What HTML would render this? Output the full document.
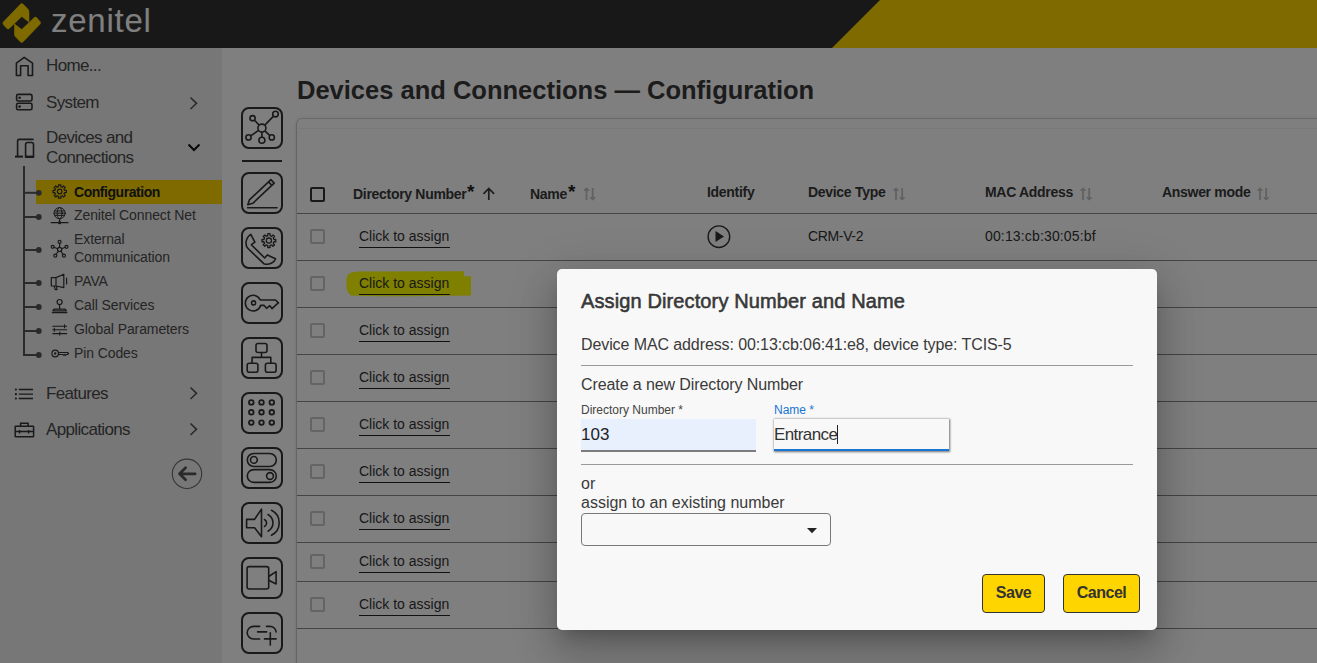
<!DOCTYPE html><html><head><meta charset="utf-8"><style>
*{box-sizing:border-box;margin:0;padding:0}
html,body{width:1317px;height:663px;overflow:hidden;background:#fff;font-family:"Liberation Sans",sans-serif;color:#333}
.abs{position:absolute}
.t{position:absolute;white-space:nowrap}
#hdr{left:0;top:0;width:1317px;height:48px;background:#303030}
#side{left:0;top:48px;width:222px;height:615px;background:#eeeeee}
.nav{font-size:17px;color:#4a4a4a;line-height:20px;left:46px;letter-spacing:-0.65px}
.sub{font-size:14px;color:#4a4a4a;line-height:18px;left:74px;letter-spacing:-0.1px}
.th{font-size:14px;font-weight:bold;color:#383838;line-height:18px;letter-spacing:-0.3px}
.cb{position:absolute;left:309.5px;width:15px;height:15px;border:2px solid #c8c8c8;border-radius:2px}
.cta{font-size:14px;color:#333;line-height:16px}
.ul{position:absolute;left:359px;width:91px;height:1px;background:#222}
.rl{position:absolute;left:297px;width:1020px;height:1px;background:#888}
#ov{left:0;top:0;width:1317px;height:663px;background:rgba(0,0,0,0.5)}
#dlg{left:557px;top:269px;width:600px;height:361px;background:#f8f8f8;border-radius:5px;box-shadow:0 11px 15px -7px rgba(0,0,0,.2),0 24px 38px 3px rgba(0,0,0,.14),0 9px 46px 8px rgba(0,0,0,.12)}
.dt{color:#3a3a3a}
.btn{position:absolute;top:305px;height:39px;background:#ffd500;border:1px solid #333;border-radius:4px;font-weight:bold;font-size:16px;color:#333;text-align:center;line-height:35px;letter-spacing:-0.5px}
</style></head><body>
<div id="hdr" class="abs"></div>
<svg class="abs" style="left:0;top:0" width="1317" height="48"><polygon points="832,48 880,0 1317,0 1317,48" fill="#ffd500"/></svg>
<svg class="abs" style="left:0;top:0" width="48" height="48"><g fill="#ffd500" stroke="#ffd500" stroke-width="0.6" stroke-linejoin="round"><path d="M3.50 24.68 Q2.17 23.19 3.56 21.75 L20.35 4.34 Q21.74 2.90 23.15 4.31 L27.57 8.73 Q28.99 10.14 28.99 12.14 L28.99 22.10 L21.74 16.52 L9.42 28.33 Q7.97 29.71 6.64 28.22 Z"/><path d="M39.98 21.40 Q41.30 22.90 39.92 24.34 L23.13 41.75 Q21.74 43.19 20.32 41.77 L15.91 37.36 Q14.49 35.94 14.49 33.94 L14.49 23.99 L21.74 29.57 L34.06 17.76 Q35.51 16.38 36.84 17.87 Z"/></g></svg>
<div class="t" style="left:51px;top:1px;font-size:33px;line-height:40px;color:#fff;letter-spacing:0.75px">zenitel</div>
<div id="side" class="abs"></div>
<div class="abs" style="left:36px;top:180px;width:186px;height:24px;background:#ffd500"></div>
<svg class="abs" style="left:0;top:0" width="222" height="663"><g fill="none" stroke="#333" stroke-width="1.6" stroke-linecap="round" stroke-linejoin="round"><path d="M16.4 75.5 V63.2 L24.2 57.4 L32.5 63.2 V75.5 H28.1 V65.7 H20.6 V75.5 Z"/><rect x="16.6" y="94.4" width="15.4" height="6.6" rx="1.6"/><rect x="16.6" y="103.2" width="15.4" height="6.6" rx="1.6"/></g><g fill="#333"><circle cx="19.6" cy="97.7" r="1.3"/><circle cx="19.6" cy="106.6" r="1.3"/></g><g fill="none" stroke="#333" stroke-width="1.6" stroke-linecap="round" stroke-linejoin="round"><path d="M17.6 156.5 V141 a1.6 1.6 0 0 1 1.6 -1.6 H33"/><path d="M25.6 157.3 V144.5 a2 2 0 0 1 2 -2 H31.5 a2 2 0 0 1 2 2 V157.3 Z"/></g><rect x="15" y="155.6" width="8" height="2" fill="#333"/><rect x="25.6" y="155.6" width="8" height="2" fill="#333"/><path d="M190.5 97.5 L196.5 103.3 L190.5 109" fill="none" stroke="#555" stroke-width="1.6"/><path d="M188.5 144.5 L194 150 L199.5 144.5" fill="none" stroke="#111" stroke-width="2"/><path d="M190.5 387.5 L196.5 393.3 L190.5 399" fill="none" stroke="#555" stroke-width="1.6"/><path d="M190.5 423.5 L196.5 429.3 L190.5 435" fill="none" stroke="#555" stroke-width="1.6"/><path d="M24 166 V355 H38" fill="none" stroke="#555" stroke-width="2"/><path d="M24 192.8 H38" stroke="#555" stroke-width="2"/><circle cx="38.8" cy="192.8" r="2.9" fill="#555"/><path d="M24 217 H38" stroke="#555" stroke-width="2"/><circle cx="38.8" cy="217" r="2.9" fill="#555"/><path d="M24 250 H38" stroke="#555" stroke-width="2"/><circle cx="38.8" cy="250" r="2.9" fill="#555"/><path d="M24 283 H38" stroke="#555" stroke-width="2"/><circle cx="38.8" cy="283" r="2.9" fill="#555"/><path d="M24 307 H38" stroke="#555" stroke-width="2"/><circle cx="38.8" cy="307" r="2.9" fill="#555"/><path d="M24 331 H38" stroke="#555" stroke-width="2"/><circle cx="38.8" cy="331" r="2.9" fill="#555"/><circle cx="38.8" cy="355" r="2.9" fill="#555"/></svg>
<div class="t nav" style="top:56px">Home...</div>
<div class="t nav" style="top:93px">System</div>
<div class="t nav" style="top:128px">Devices and<br>Connections</div>
<div class="t nav" style="top:384px">Features</div>
<div class="t nav" style="top:420px">Applications</div>
<div class="t sub" style="top:183px;font-weight:bold;color:#222;letter-spacing:-0.45px">Configuration</div>
<div class="t sub" style="top:206px">Zenitel Connect Net</div>
<div class="t sub" style="top:230px">External<br>Communication</div>
<div class="t sub" style="top:272px">PAVA</div>
<div class="t sub" style="top:296px">Call Services</div>
<div class="t sub" style="top:320px">Global Parameters</div>
<div class="t sub" style="top:344px">Pin Codes</div>
<svg class="abs" style="left:0;top:0" width="222" height="663"><g fill="none" stroke="#333" stroke-width="1.2" stroke-linecap="round" stroke-linejoin="round"><circle cx="59.7" cy="191.5" r="2.3"/><path d="M66.39 190.30 L66.39 192.70 L64.59 192.55 L63.93 194.16 L65.28 195.39 L63.59 197.08 L62.41 195.70 L60.81 196.38 L60.90 198.19 L58.50 198.19 L58.65 196.39 L57.04 195.73 L55.81 197.08 L54.12 195.39 L55.50 194.21 L54.82 192.61 L53.01 192.70 L53.01 190.30 L54.81 190.45 L55.47 188.84 L54.12 187.61 L55.81 185.92 L56.99 187.30 L58.59 186.62 L58.50 184.81 L60.90 184.81 L60.75 186.61 L62.36 187.27 L63.59 185.92 L65.28 187.61 L63.90 188.79 L64.58 190.39 Z"/><g stroke-width="1"><circle cx="59.6" cy="213.2" r="5.6"/><ellipse cx="59.6" cy="213.2" rx="2.4" ry="5.6"/><path d="M54 213.2 h11.2 M54.8 211 h9.6 M54.8 215.4 h9.6"/></g><path d="M59.6 218.8 v3.9 M51.2 222.7 h16.8" stroke-width="1.2"/><circle cx="59.6" cy="222.7" r="1" fill="#333"/><circle cx="59.6" cy="249.4" r="2.1"/><path d="M59.6 247.3 V243.3 M57.6 248.7 L54 247.3 M61.6 248.7 L65.2 247.3 M58.4 251.1 L56.1 254.5 M60.8 251.1 L63.1 254.5"/><circle cx="59.6" cy="241.9" r="1.5"/><circle cx="52.7" cy="246.8" r="1.5"/><circle cx="66.5" cy="246.8" r="1.5"/><circle cx="55.3" cy="255.7" r="1.5"/><circle cx="63.9" cy="255.7" r="1.5"/><path d="M51.3 277.6 H56 L63.8 274.2 V287.6 L56 286 H51.3 Z M56 277.6 V286 M54.2 286 L55.2 289.6 H57 L56.5 286.4 M66.6 278 V284"/><circle cx="59.6" cy="302" r="2.5"/><path d="M59.6 304.5 v4.6 M54 309.2 h11.2 l1.2 1.6 h-13.6 z M52.3 312.6 h14.6"/><path d="M52.8 326.3 h13.8 M52.8 329.8 h13.8 M52.8 333.6 h13.8 M64.6 324.8 v3 M54.3 328.3 v3 M59.8 332.1 v3" stroke-width="1.1"/><circle cx="55.2" cy="353.5" r="3.3"/><circle cx="55.2" cy="353.5" r=".6"/><path d="M58.5 352.5 h9 l1 1 l-1 1 h-1.2 l-.8 1 l-.8 -1 l-.8 1 l-.8 -1 h-4.6"/></g><g fill="#333"><circle cx="15.9" cy="389.5" r="1.1"/><circle cx="15.9" cy="394.2" r="1.1"/><circle cx="15.9" cy="398.5" r="1.1"/></g><g stroke="#333" stroke-width="1.3"><path d="M18.8 389.5 H33 M18.8 394.2 H33 M18.8 398.5 H33"/></g><g fill="none" stroke="#333" stroke-width="1.5"><rect x="15.2" y="426.2" width="18.4" height="10.6" rx="0.6"/><path d="M20.6 426.2 v-2.9 h7.5 v2.9 M15.2 431.5 h18.4 M19.6 430 v3.5 M28.6 430 v3.5"/></g><circle cx="187" cy="473.8" r="14.7" fill="none" stroke="#6a6a6a" stroke-width="1.1"/><path d="M179.5 473.8 H195.2 M185.6 467.8 L179.5 473.8 L185.6 479.8" fill="none" stroke="#555" stroke-width="2.7" stroke-linecap="round" stroke-linejoin="round"/></svg>
<svg class="abs" style="left:241px;top:107px" width="42" height="42"><rect x="1" y="1" width="40" height="40" rx="7" fill="none" stroke="#333" stroke-width="2"/><g fill="none" stroke="#333" stroke-width="1.6" stroke-linecap="round" stroke-linejoin="round"><line x1="20.9" y1="21.1" x2="11.6" y2="11.2"/><line x1="20.9" y1="21.1" x2="34.5" y2="7.1"/><line x1="20.9" y1="21.1" x2="7.5" y2="30.4"/><line x1="20.9" y1="21.1" x2="20.9" y2="33.2"/><line x1="20.9" y1="21.1" x2="30.8" y2="30.4"/><g fill="#fff"><circle cx="20.9" cy="21.1" r="4"/><circle cx="11.6" cy="11.2" r="2.6"/><circle cx="34.5" cy="7.1" r="2.8"/><circle cx="7.5" cy="30.4" r="2.6"/><circle cx="20.9" cy="33.2" r="3"/><circle cx="30.8" cy="30.4" r="2.6"/></g></g></svg>
<svg class="abs" style="left:241px;top:172px" width="42" height="42"><rect x="1" y="1" width="40" height="40" rx="7" fill="none" stroke="#333" stroke-width="2"/><g fill="none" stroke="#333" stroke-width="1.6" stroke-linecap="round" stroke-linejoin="round"><path d="M6.8 32.8 L8.4 27.9 L29.9 7.6 L33.2 11.1 L11.8 31.3 Z M27.5 9.9 L30.9 13.4"/><line x1="6.6" y1="35.8" x2="36" y2="35.8"/></g></svg>
<svg class="abs" style="left:241px;top:227px" width="42" height="42"><rect x="1" y="1" width="40" height="40" rx="7" fill="none" stroke="#333" stroke-width="2"/><g fill="none" stroke="#333" stroke-width="1.6" stroke-linecap="round" stroke-linejoin="round"><path d="M9.8 7.3 L13.9 15.2 L10.4 17.7 L23.7 31 L26.3 27.9 L34.5 31.7 C33.5 35.5 28 38.5 22.8 36.7 L7 21.5 C4 18.5 4 11 9.8 7.3 Z"/><circle cx="27.9" cy="13.6" r="2.6" stroke-width="1.3"/><path d="M34.81 12.45 L34.81 14.75 L32.88 14.72 L32.18 16.37 L33.60 17.67 L31.97 19.30 L30.63 17.91 L28.97 18.59 L29.05 20.51 L26.75 20.51 L26.78 18.58 L25.13 17.88 L23.83 19.30 L22.20 17.67 L23.59 16.33 L22.91 14.67 L20.99 14.75 L20.99 12.45 L22.92 12.48 L23.62 10.83 L22.20 9.53 L23.83 7.90 L25.17 9.29 L26.83 8.61 L26.75 6.69 L29.05 6.69 L29.02 8.62 L30.67 9.32 L31.97 7.90 L33.60 9.53 L32.21 10.87 L32.89 12.53 Z" stroke-width="1.3"/></g></svg>
<svg class="abs" style="left:241px;top:282px" width="42" height="42"><rect x="1" y="1" width="40" height="40" rx="7" fill="none" stroke="#333" stroke-width="2"/><g fill="none" stroke="#333" stroke-width="1.6" stroke-linecap="round" stroke-linejoin="round"><path d="M19.3 18.05 H34.5 L37.4 20.9 L34.5 23.4 L31 26.6 L28.8 23.7 L25.6 26.3 L23.1 23.4 L19.6 23.4 A7.8 7.8 0 1 1 19.3 18.05 Z"/><circle cx="12.6" cy="20.9" r="2"/></g></svg>
<svg class="abs" style="left:241px;top:337px" width="42" height="42"><rect x="1" y="1" width="40" height="40" rx="7" fill="none" stroke="#333" stroke-width="2"/><g fill="none" stroke="#333" stroke-width="1.6" stroke-linecap="round" stroke-linejoin="round"><rect x="15" y="6.5" width="11" height="9" rx="2"/><rect x="6.2" y="26.2" width="10.7" height="9" rx="2"/><rect x="24.4" y="26.2" width="10.7" height="9" rx="2"/><path d="M20.5 15.5 V20.4 M11.1 26.2 V20.4 H29.8 V26.2"/></g></svg>
<svg class="abs" style="left:241px;top:392px" width="42" height="42"><rect x="1" y="1" width="40" height="40" rx="7" fill="none" stroke="#333" stroke-width="2"/><g fill="none" stroke="#333" stroke-width="1.6" stroke-linecap="round" stroke-linejoin="round"><circle cx="10.3" cy="10.4" r="2.3" stroke-width="1.8"/><circle cx="20.5" cy="10.4" r="2.3" stroke-width="1.8"/><circle cx="30.8" cy="10.4" r="2.3" stroke-width="1.8"/><circle cx="10.3" cy="20.3" r="2.3" stroke-width="1.8"/><circle cx="20.5" cy="20.3" r="2.3" stroke-width="1.8"/><circle cx="30.8" cy="20.3" r="2.3" stroke-width="1.8"/><circle cx="10.3" cy="30.6" r="2.3" stroke-width="1.8"/><circle cx="20.5" cy="30.6" r="2.3" stroke-width="1.8"/><circle cx="30.8" cy="30.6" r="2.3" stroke-width="1.8"/></g></svg>
<svg class="abs" style="left:241px;top:447px" width="42" height="42"><rect x="1" y="1" width="40" height="40" rx="7" fill="none" stroke="#333" stroke-width="2"/><g fill="none" stroke="#333" stroke-width="1.6" stroke-linecap="round" stroke-linejoin="round"><rect x="6.3" y="6.5" width="29" height="13" rx="6.5"/><circle cx="12.9" cy="12.9" r="3.4"/><rect x="6.3" y="22.6" width="29" height="12.8" rx="6.4"/><circle cx="29" cy="29" r="3.4"/></g></svg>
<svg class="abs" style="left:241px;top:502px" width="42" height="42"><rect x="1" y="1" width="40" height="40" rx="7" fill="none" stroke="#333" stroke-width="2"/><g fill="none" stroke="#333" stroke-width="1.6" stroke-linecap="round" stroke-linejoin="round"><path d="M5.6 17.4 H13.6 L20.5 7.1 V34.8 L13.6 25.7 H5.6 Z"/><path d="M23.5 17.5 A4 4 0 0 1 23.5 24.5 M27 12.5 A9.5 9.5 0 0 1 27 29.2 M30.5 8.3 A14 14 0 0 1 30.5 33.3"/></g></svg>
<svg class="abs" style="left:241px;top:557px" width="42" height="42"><rect x="1" y="1" width="40" height="40" rx="7" fill="none" stroke="#333" stroke-width="2"/><g fill="none" stroke="#333" stroke-width="1.6" stroke-linecap="round" stroke-linejoin="round"><rect x="6.1" y="9.6" width="21.6" height="22.4" rx="2"/><path d="M27.7 19.5 L35.1 14.6 V27 L27.7 23.2"/></g></svg>
<svg class="abs" style="left:241px;top:612px" width="42" height="42"><rect x="1" y="1" width="40" height="40" rx="7" fill="none" stroke="#333" stroke-width="2"/><g fill="none" stroke="#333" stroke-width="1.6" stroke-linecap="round" stroke-linejoin="round"><path d="M18.6 14.4 H12.5 A6.3 6.3 0 0 0 12.5 27 H18.6 M16.6 19.9 H25.6 M25.5 14.4 H28.8 A6.3 6.3 0 0 1 35.1 19.9 M23.5 26.9 H35.1 M29.3 20.7 V33.1"/></g></svg>
<div class="abs" style="left:242px;top:160px;width:40px;height:2px;background:#333"></div>
<div class="t" style="left:297px;top:75px;font-size:25.5px;font-weight:bold;color:#383838;line-height:30px">Devices and Connections — Configuration</div>
<div class="abs" style="left:297px;top:119px;width:1040px;height:560px;background:#fff;border-radius:5px;box-shadow:0 0 0 1px rgba(0,0,0,.12),0 1px 3px rgba(0,0,0,.2),0 0 6px rgba(0,0,0,.08)"></div>
<div class="abs" style="left:298px;top:128px;width:1020px;height:1px;background:#f2f2f2"></div>
<div class="abs" style="left:310px;top:187px;width:15px;height:15px;border:2px solid #333;border-radius:2px"></div>
<div class="t th" style="left:353px;top:185px">Directory Number</div><div class="t" style="left:467px;top:182px;font-size:19px;font-weight:bold;line-height:20px;color:#222">*</div>
<div class="t th" style="left:530px;top:185px">Name</div><div class="t" style="left:568px;top:182px;font-size:19px;font-weight:bold;line-height:20px;color:#222">*</div>
<div class="t th" style="left:707px;top:183px">Identify</div>
<div class="t th" style="left:808px;top:183px">Device Type</div>
<div class="t th" style="left:985px;top:183px">MAC Address</div>
<div class="t th" style="left:1162px;top:183px">Answer mode</div>
<svg class="abs" style="left:0;top:0" width="1317" height="663"><path d="M488.8 200 V189 M483.5 193.8 L488.8 188.5 L494.1 193.8" fill="none" stroke="#3a3a3a" stroke-width="1.7"/><g transform="translate(584,0)"><path d="M2.5 190 V200 M8.7 188 V198" stroke="#c4c4c4" stroke-width="1.8"/><path d="M0 190.3 L2.5 187.8 L5 190.3 Z M6.2 197.7 L8.7 200.2 L11.2 197.7 Z" fill="#c4c4c4" stroke="#c4c4c4" stroke-width="1"/></g><g transform="translate(893.5,0)"><path d="M2.5 190 V200 M8.7 188 V198" stroke="#c4c4c4" stroke-width="1.8"/><path d="M0 190.3 L2.5 187.8 L5 190.3 Z M6.2 197.7 L8.7 200.2 L11.2 197.7 Z" fill="#c4c4c4" stroke="#c4c4c4" stroke-width="1"/></g><g transform="translate(1080.5,0)"><path d="M2.5 190 V200 M8.7 188 V198" stroke="#c4c4c4" stroke-width="1.8"/><path d="M0 190.3 L2.5 187.8 L5 190.3 Z M6.2 197.7 L8.7 200.2 L11.2 197.7 Z" fill="#c4c4c4" stroke="#c4c4c4" stroke-width="1"/></g><g transform="translate(1257.5,0)"><path d="M2.5 190 V200 M8.7 188 V198" stroke="#c4c4c4" stroke-width="1.8"/><path d="M0 190.3 L2.5 187.8 L5 190.3 Z M6.2 197.7 L8.7 200.2 L11.2 197.7 Z" fill="#c4c4c4" stroke="#c4c4c4" stroke-width="1"/></g><circle cx="718.9" cy="236.7" r="10.8" fill="none" stroke="#333" stroke-width="1.4"/><path d="M715.5 231 L724 236.5 L715.5 242 Z" fill="#333"/></svg>
<div class="rl" style="top:213px"></div>
<div class="rl" style="top:260px"></div>
<div class="rl" style="top:307px"></div>
<div class="rl" style="top:354px"></div>
<div class="rl" style="top:401px"></div>
<div class="rl" style="top:448px"></div>
<div class="rl" style="top:495px"></div>
<div class="rl" style="top:542px"></div>
<div class="rl" style="top:581px"></div>
<div class="rl" style="top:628px"></div>
<svg class="abs" style="left:345px;top:271px" width="128" height="28"><path d="M1.8 6 Q 3 0.8 14 0.5 L 119 0.2 L 119 5.2 L 126 5.2 L 126 24.5 Q 70 25.8 20 25 L 6 24.4 Q 1.2 21 1.4 13 Z" fill="#ffff00"/></svg>
<div class="cb" style="top:229.0px"></div>
<div class="t cta" style="left:359px;top:227.5px">Click to assign</div>
<div class="ul" style="top:247px"></div>
<div class="cb" style="top:276.0px"></div>
<div class="t cta" style="left:359px;top:274.5px">Click to assign</div>
<div class="ul" style="top:294px"></div>
<div class="cb" style="top:323.0px"></div>
<div class="t cta" style="left:359px;top:321.5px">Click to assign</div>
<div class="ul" style="top:341px"></div>
<div class="cb" style="top:370.0px"></div>
<div class="t cta" style="left:359px;top:368.5px">Click to assign</div>
<div class="ul" style="top:388px"></div>
<div class="cb" style="top:417.0px"></div>
<div class="t cta" style="left:359px;top:415.5px">Click to assign</div>
<div class="ul" style="top:435px"></div>
<div class="cb" style="top:464.0px"></div>
<div class="t cta" style="left:359px;top:462.5px">Click to assign</div>
<div class="ul" style="top:482px"></div>
<div class="cb" style="top:511.0px"></div>
<div class="t cta" style="left:359px;top:509.5px">Click to assign</div>
<div class="ul" style="top:529px"></div>
<div class="cb" style="top:554.0px"></div>
<div class="t cta" style="left:359px;top:552.5px">Click to assign</div>
<div class="ul" style="top:572px"></div>
<div class="cb" style="top:597.0px"></div>
<div class="t cta" style="left:359px;top:595.5px">Click to assign</div>
<div class="ul" style="top:615px"></div>
<div class="t" style="left:808px;top:228px;font-size:14px;line-height:16px;color:#333;letter-spacing:-0.35px">CRM-V-2</div>
<div class="t" style="left:985px;top:228px;font-size:14px;line-height:16px;color:#333;letter-spacing:0.15px">00:13:cb:30:05:bf</div>
<div id="ov" class="abs"></div>
<div id="dlg" class="abs">
<div class="t dt" style="left:24px;top:20px;font-size:20px;font-weight:normal;-webkit-text-stroke:0.55px #333;letter-spacing:0.12px;line-height:24px">Assign Directory Number and Name</div>
<div class="t dt" style="left:24px;top:66px;font-size:16px;line-height:20px;letter-spacing:-0.1px">Device MAC address: 00:13:cb:06:41:e8, device type: TCIS-5</div>
<div class="abs" style="left:24px;top:96px;width:552px;height:1px;background:#999"></div>
<div class="t dt" style="left:24px;top:106px;font-size:16px;line-height:20px;letter-spacing:-0.1px">Create a new Directory Number</div>
<div class="t dt" style="left:24px;top:134px;font-size:12px;line-height:14px;color:#444">Directory Number *</div>
<div class="t dt" style="left:217px;top:134px;font-size:12px;line-height:14px;color:#1976d2">Name *</div>
<div class="abs" style="left:24px;top:150px;width:175px;height:33px;background:#e8f0fe;border-bottom:2px solid #7d7d7d"></div>
<div class="t dt" style="left:24px;top:156px;font-size:17px;line-height:20px;color:#222">103</div>
<div class="abs" style="left:217px;top:150px;width:175px;height:32px;background:#f8f8f8;border-bottom:2px solid #1976d2;box-shadow:0 0 2px 0.5px rgba(0,0,0,.55)"></div>
<div class="t dt" style="left:217px;top:156px;font-size:17px;line-height:20px;color:#333;letter-spacing:-0.6px">Entrance</div>
<div class="abs" style="left:280px;top:156px;width:1px;height:19px;background:#222"></div>
<div class="abs" style="left:24px;top:195px;width:552px;height:1px;background:#999"></div>
<div class="t dt" style="left:24px;top:205px;font-size:16px;line-height:19px">or<br>assign to an existing number</div>
<div class="abs" style="left:24px;top:244px;width:250px;height:33px;border:1px solid #777;border-radius:4px"></div>
<svg class="abs" style="left:250px;top:259px" width="12" height="6"><path d="M0 0 H10 L5 5.2 Z" fill="#222"/></svg>
<div class="btn" style="left:425px;width:63px">Save</div>
<div class="btn" style="left:506px;width:77px">Cancel</div>
</div>
</body></html>
